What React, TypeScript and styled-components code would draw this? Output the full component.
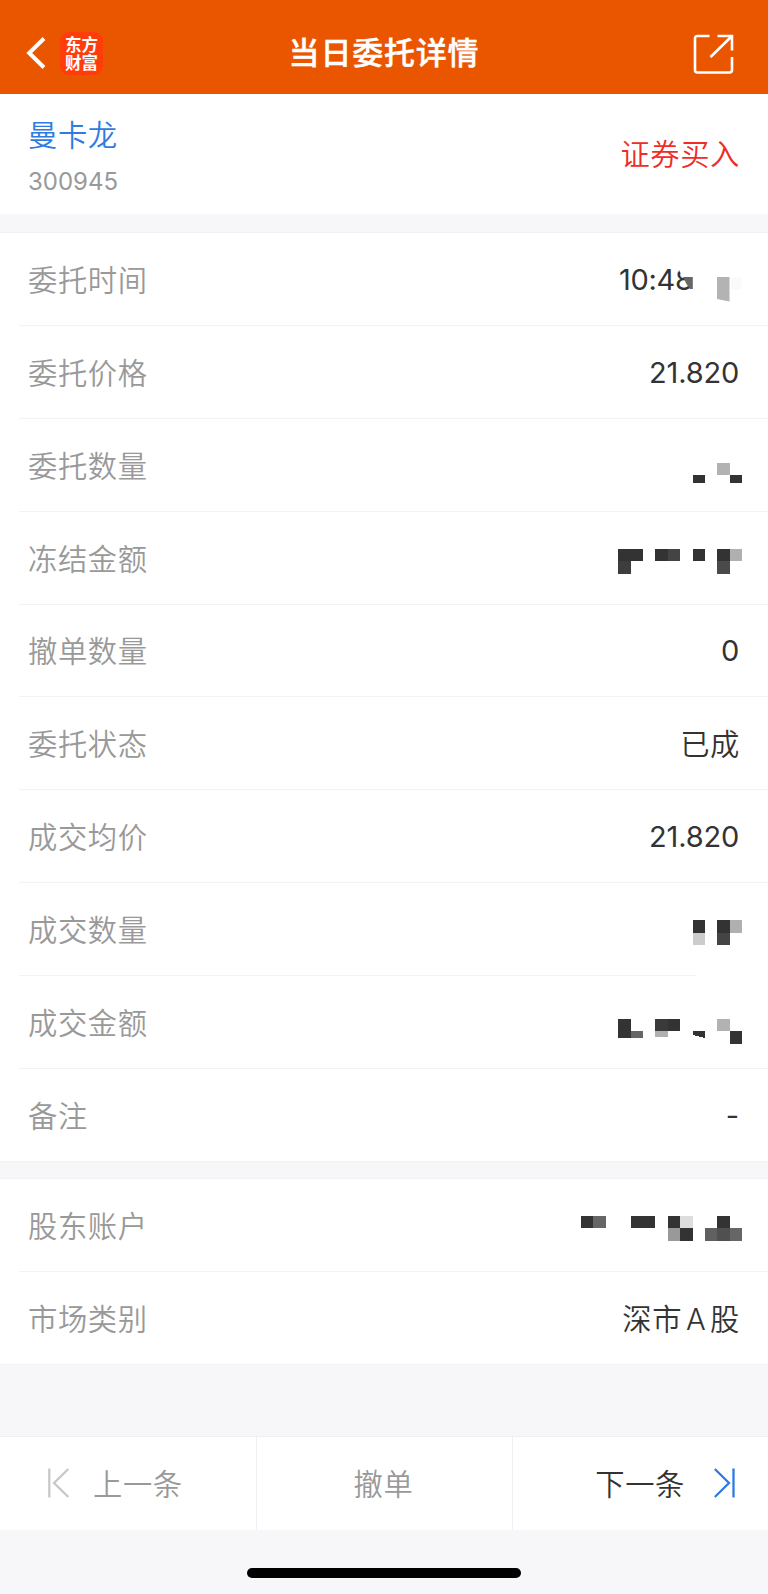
import React from "react";
import styled, { createGlobalStyle } from "styled-components";

const GlobalStyle = createGlobalStyle`
  * { box-sizing: border-box; }
  body {
    margin: 0;
    background: #f7f7fa;
    font-family: Inter, "Noto Sans CJK SC", sans-serif;
  }
`;

const Page = styled.div`
  width: 768px;
  height: 1594px;
  display: flex;
  flex-direction: column;
  overflow: hidden;
  background: #f7f7fa;
  color: #333;
`;

const Header = styled.header`
  height: 94px;
  flex: none;
  display: grid;
  grid-template-columns: 1fr auto 1fr;
  align-items: center;
  padding: 12px 34px 0 26px;
  background: #ea5500;
  color: #fff;
`;

const HeaderLeft = styled.div`
  display: flex;
  align-items: center;
  gap: 14px;
`;

const Title = styled.h1`
  margin: 0 0 0 8px;
  font-size: 31px;
  line-height: 46px;
  font-weight: 500;
  letter-spacing: 0.8px;
  -webkit-text-stroke: 0.4px #fff;
`;

const HeaderRight = styled.div`
  display: flex;
  justify-content: flex-end;
  padding-top: 2px;
`;

const Logo = styled.div`
  width: 43px;
  height: 43px;
  border-radius: 9px;
  background: #ff3d0a;
  display: flex;
  align-items: center;
  justify-content: center;
  text-align: center;
  white-space: pre-line;
  font-family: "Noto Sans CJK SC", sans-serif;
  font-size: 16.5px;
  line-height: 18px;
  font-weight: 700;
`;

const Stock = styled.section`
  height: 120px;
  flex: none;
  display: flex;
  align-items: center;
  justify-content: space-between;
  padding: 0 28px;
  background: #fff;
`;

const StockInfo = styled.div`
  padding-top: 5px;
`;

const StockName = styled.div`
  color: #2f7be0;
  font-size: 29.3px;
  line-height: 42px;
  font-weight: 350;
  letter-spacing: 0.6px;
`;

const StockCode = styled.div`
  margin-top: 8px;
  color: #999;
  font-size: 24px;
  line-height: 34px;
  letter-spacing: 0;
`;

const Side = styled.div`
  padding-bottom: 5px;
  color: #f02b28;
  font-size: 29.3px;
  font-weight: 350;
  letter-spacing: 0.6px;
`;

const Group = styled.section<{ $height: number; $gap: number }>`
  height: ${(p) => p.$height}px;
  margin-top: ${(p) => p.$gap}px;
  flex: none;
  display: flex;
  flex-direction: column;
  background: #fff;
  box-shadow: 0 0 0 1px #f2f2f5;
`;

const Row = styled.div`
  flex: 1 1 0;
  display: flex;
  align-items: center;
  justify-content: space-between;
  margin-left: 19px;
  padding: 0 29px 0 9px;
  position: relative;
`;

const Divider = styled.div<{ $short?: boolean }>`
  height: 1px;
  flex: none;
  margin-left: 19px;
  margin-right: ${(p) => (p.$short ? 72 : 0)}px;
  background: #f3f3f5;
`;

const Label = styled.span`
  padding-bottom: 2px;
  color: #999;
  font-size: 29.3px;
  font-weight: 350;
  letter-spacing: 0.6px;
`;

const Value = styled.span<{ $cjk?: boolean }>`
  font-size: ${(p) => (p.$cjk ? 29.3 : 29)}px;
  font-weight: ${(p) => (p.$cjk ? 350 : 400)};
  letter-spacing: ${(p) => (p.$cjk ? 0.6 : -0.2)}px;
  word-spacing: ${(p) => (p.$cjk ? -5 : 0)}px;
  margin-right: ${(p) => (p.$cjk ? -1 : 0)}px;
  padding-top: ${(p) => (p.$cjk ? 0 : 1)}px;
  padding-bottom: ${(p) => (p.$cjk ? 2 : 0)}px;
`;

const TimeValue = styled.span`
  font-size: 29px;
  letter-spacing: -0.3px;
  width: 120px;
  padding-top: 1px;
`;

const MosaicSvg = styled.svg`
  display: block;
  margin-right: -3px;
`;

const MaskSvg = styled.svg`
  position: absolute;
  right: 26px;
  top: 0;
`;

const Footer = styled.nav`
  height: 94px;
  flex: none;
  margin-top: 72px;
  display: grid;
  grid-template-columns: repeat(3, 1fr);
  background: #fff;
  border-top: 1px solid #efeff1;
`;

const FooterButton = styled.button<{ $active?: boolean }>`
  display: flex;
  align-items: center;
  justify-content: center;
  gap: 24px;
  border: 0;
  border-left: 1px solid #f0f0f2;
  padding: 0 2px 2px 0;
  background: none;
  font: inherit;
  font-size: 29.3px;
  font-weight: 350;
  letter-spacing: 0.6px;
  color: ${(p) => (p.$active ? "#333" : "#999")};
  &:first-child { border-left: 0; justify-content: flex-start; padding-left: 48px; }
  &:last-child { justify-content: flex-end; padding-right: 33px; gap: 29px; }
`;

const FooterText = styled.span`
  padding-bottom: 2px;
`;

const HomeBar = styled.div`
  width: 274px;
  height: 10px;
  margin: 38px 0 0 247px;
  border-radius: 5px;
  background: #000;
`;

/* column, top, height, colour, rise of the lower left corner; columns are counted from the left of 13 */
type Cell = [number, number, number, string, number?];
const CELL = 12.4;

const Mosaic = ({ cells }: { cells: Cell[] }) => (
  <MosaicSvg width={CELL * 13} height={92} viewBox={`0 0 ${CELL * 13} 92`} shapeRendering="crispEdges">
    {cells.map(([col, y, h, fill, slant = 0], i) => (
      <path key={i} d={`M${col * CELL} ${y}h${CELL}v${h}l${-CELL} ${-slant}z`} fill={fill} />
    ))}
  </MosaicSvg>
);

const D = "#333";
const orderRows: { label: string; value?: string; cjk?: boolean; cells?: Cell[]; time?: boolean }[] = [
  { label: "委托时间", value: "10:48", time: true },
  { label: "委托价格", value: "21.820" },
  { label: "委托数量", cells: [[9, 56, 8, D], [11, 43.5, 12.5, "#b2b2b2"], [12, 56, 8, D]] },
  {
    label: "冻结金额",
    cells: [
      [3, 37, 12.4, D], [4, 37, 12.4, D], [3, 49.4, 12.4, "#3d3d3d"],
      [6, 37, 12.4, D], [7, 37, 12.4, "#444"], [9, 37, 12.4, D],
      [11, 37, 12.4, D], [11, 49.4, 12.4, "#4a4a4a"], [12, 37, 12.4, "#b0b0b0"],
    ],
  },
  { label: "撤单数量", value: "0" },
  { label: "委托状态", value: "已成", cjk: true },
  { label: "成交均价", value: "21.820" },
  {
    label: "成交数量",
    cells: [
      [9, 37.2, 12.6, D], [9, 49.8, 12.4, "#ccc"], [11, 37.2, 12.6, D],
      [11, 49.8, 12.4, "#444"], [12, 37.2, 12.6, "#b0b0b0"],
    ],
  },
  {
    label: "成交金额",
    cells: [
      [3, 43, 19, D], [4, 55.5, 6.5, "#666"], [6, 43, 12.5, "#3a3a3a"], [7, 43, 12.5, D],
      [6, 55.5, 5, "#b0b0b0", -1], [9, 55.5, 6.5, D, 3], [11, 43, 12.5, "#b2b2b2"], [12, 55.5, 12.4, D],
    ],
  },
  { label: "备注", value: "-" },
];

const accountCells: Cell[] = [
  [0, 37, 12.5, D], [1, 37, 12.5, "#666"], [4, 37, 12.5, D], [5, 37, 12.5, D],
  [7, 37, 12.5, D], [8, 37, 12.5, "#ddd"], [7, 49.5, 12.4, "#999"], [8, 49.5, 12.4, D],
  [11, 37, 12.5, D], [10, 49.5, 12.4, "#606060"], [11, 49.5, 12.4, "#505050"], [12, 49.5, 12.4, "#666"],
];

const TimeMask = () => (
  <MaskSvg width="70" height="92" viewBox="0 0 70 92">
    <path d="M7.5 28H26V62H20.8V44H12L7.5 38.5Z" fill="#fff" />
    <path d="M11 44H20.8V56H18L14.5 51Z" fill="#666" />
    <path d="M45 44H57.5V68.5L45 66Z" fill="#b3b3b3" />
    <rect x="59" y="44" width="10.5" height="12.5" fill="#fafafa" />
  </MaskSvg>
);

const SkipIcon = ({ next }: { next?: boolean }) => (
  <svg width="21" height="30" viewBox="0 0 21 30" fill="none" strokeWidth="2.3" stroke={next ? "#2f7be0" : "#c8c8c8"}>
    <path d={next ? "M19.5 .5V29.5M.8 1L15 15L.8 29" : "M1.3 .5V29.5M20.3 1L6 15L20.3 29"} />
  </svg>
);

export default function App() {
  return (
    <Page>
      <GlobalStyle />
      <Header>
        <HeaderLeft>
          <svg width="20" height="32" viewBox="0 0 20 32" fill="none" stroke="#fff" strokeWidth="4">
            <path d="M18 1.5L3.2 16L18 30.5" />
          </svg>
          <Logo>{"东方\n财富"}</Logo>
        </HeaderLeft>
        <Title>当日委托详情</Title>
        <HeaderRight>
          <svg width="41" height="41" viewBox="0 0 41 41" fill="none" stroke="#fff" strokeWidth="2.6">
            <path d="M16.5 2H4.5Q2 2 2 4.5V36Q2 38.5 4.5 38.5H36.5Q39 38.5 39 36V23" />
            <path d="M24.5 2H39V16.5M39 2L17.5 23" />
          </svg>
        </HeaderRight>
      </Header>

      <Stock>
        <StockInfo>
          <StockName>曼卡龙</StockName>
          <StockCode>300945</StockCode>
        </StockInfo>
        <Side>证券买入</Side>
      </Stock>

      <Group $height={927.5} $gap={19}>
        {orderRows.map((row, i) => (
          <React.Fragment key={row.label}>
            {i > 0 && <Divider $short={i === 8} />}
            <Row>
              <Label>{row.label}</Label>
              {row.cells && <Mosaic cells={row.cells} />}
              {row.time && <TimeValue>{row.value}</TimeValue>}
              {row.time && <TimeMask />}
              {row.value && !row.time && <Value $cjk={row.cjk}>{row.value}</Value>}
            </Row>
          </React.Fragment>
        ))}
      </Group>

      <Group $height={185} $gap={18.5}>
        <Row>
          <Label>股东账户</Label>
          <Mosaic cells={accountCells} />
        </Row>
        <Divider />
        <Row>
          <Label>市场类别</Label>
          <Value $cjk>深市 A 股</Value>
        </Row>
      </Group>

      <Footer>
        <FooterButton>
          <SkipIcon />
          <FooterText>上一条</FooterText>
        </FooterButton>
        <FooterButton>
          <FooterText>撤单</FooterText>
        </FooterButton>
        <FooterButton $active>
          <FooterText>下一条</FooterText>
          <SkipIcon next />
        </FooterButton>
      </Footer>
      <HomeBar />
    </Page>
  );
}
